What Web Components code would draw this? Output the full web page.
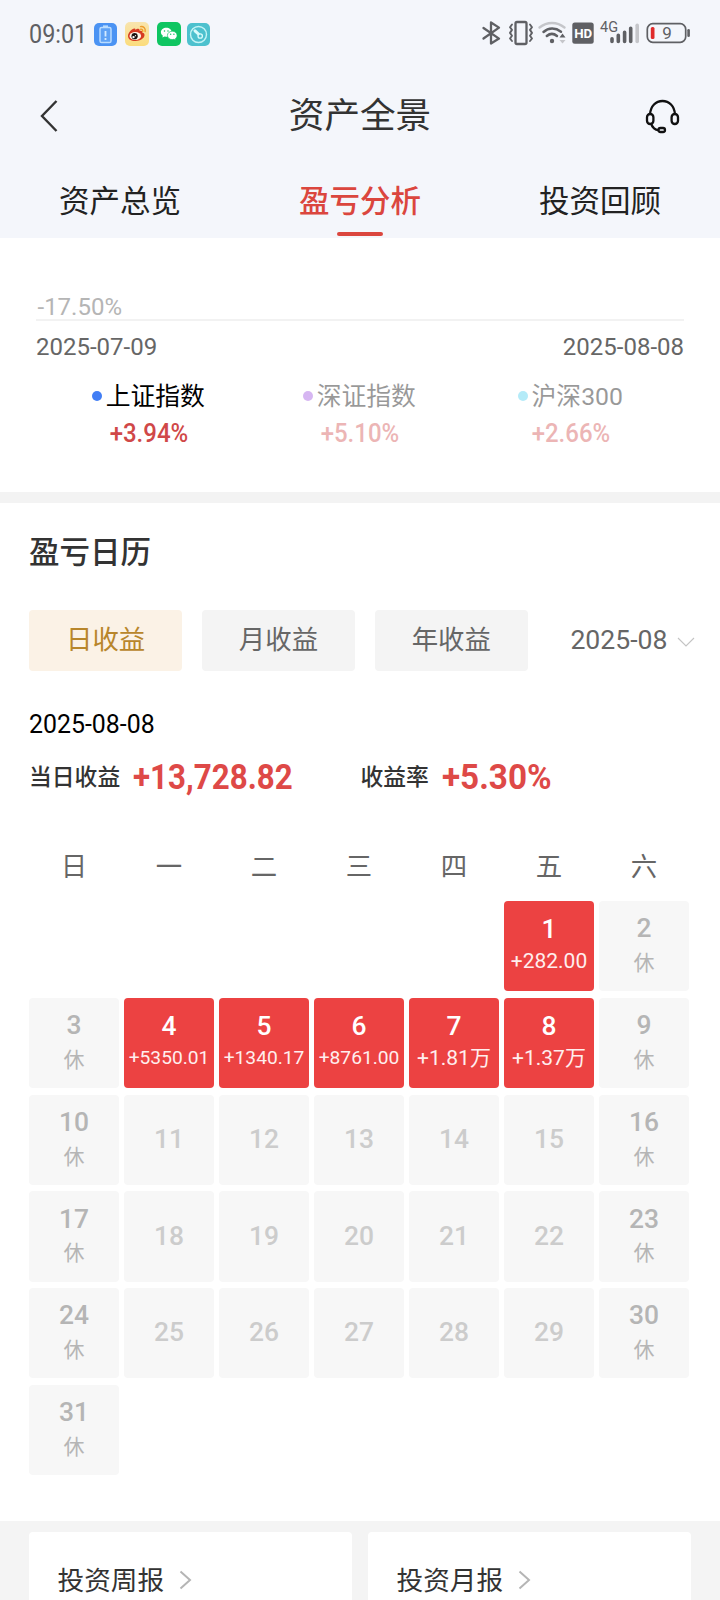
<!DOCTYPE html>
<html lang="zh-CN">
<head>
<meta charset="utf-8">
<title>资产全景</title>
<style>
html,body{margin:0;padding:0;background:#fff}
body{width:720px;height:1600px;overflow:hidden;font-family:Roboto,"Noto Sans CJK SC",sans-serif;color:#333}
</style>
</head>
<body>
<asset-page></asset-page>
<script>
function define(name, css, html) {
  customElements.define(name, class extends HTMLElement {
    connectedCallback() {
      if (this.shadowRoot) return;
      const root = this.attachShadow({ mode: 'open' });
      root.innerHTML = '<style>*{box-sizing:border-box}' + css + '</style>' + (typeof html === 'function' ? html(this) : html);
    }
  });
}

define('status-bar', `
:host{display:flex;height:70px;padding:0 28px 0 29px;justify-content:space-between;align-items:flex-start;color:#5f6064}
.side{display:flex;align-items:flex-start}
svg{display:block;flex:none}
.time{width:65px;line-height:30px;margin-top:19.5px;font-size:25px}
.time span{display:inline-block;transform:scaleX(.935);transform-origin:0 50%}
`, `
<div class="side">
  <div class="time"><span>09:01</span></div>
  <svg width="23" height="23" viewBox="0 0 23 23" style="margin-top:23px"><rect width="23" height="23" rx="5" fill="#4b93f3"/><rect x="6" y="4.5" width="11" height="15" rx="1.6" fill="#5fa2f5" stroke="#b9dcff" stroke-width="1.5"/><path d="M9 3.2h5" stroke="#b9dcff" stroke-width="1.6"/><path d="M11.5 8v5.5M11.5 15v2" stroke="#d4eaff" stroke-width="1.8"/></svg>
  <svg width="24" height="24" viewBox="0 0 24 24" style="margin:22px 0 0 8px"><defs><linearGradient id="g" x2="0" y2="1"><stop stop-color="#f8e4ae"/><stop offset="1" stop-color="#fbdc7c"/></linearGradient></defs><rect width="24" height="24" rx="5" fill="url(#g)"/><path d="M10.3 8.1c1.5-1.5 3.8-2 4.3-.4.2.7 0 1.2 0 1.2s2.900-.6 2.600 1.700c1.900.5 2.300 1.400 2.300 2.700 0 3-4.300 5.700-9 5.700S3 16.900 3 13.900c0-3.200 4.300-7.700 6.600-7.400.9.100 1 .9.700 1.600z" fill="#d63a22"/><ellipse cx="10.300" cy="14" rx="5.800" ry="4" fill="#fff6e8"/><circle cx="9.600" cy="14.200" r="3.100" fill="#1c1412"/><circle cx="8.500" cy="15.100" r="1.200" fill="#fff"/><circle cx="10.500" cy="13.700" r=".6" fill="#fff"/><path d="M15.500 4.600c3.200-.4 5.300 1.900 4.600 4.900M15.700 7.200c1.500-.2 2.300.8 2 2.100" fill="none" stroke="#ee9c2c" stroke-width="1.400" stroke-linecap="round"/></svg>
  <svg width="24" height="24" viewBox="0 0 24 24" style="margin:22px 0 0 8px"><rect width="24" height="24" rx="5" fill="#0fc561"/><path d="M9.300 5.700c-3 0-5.400 2-5.400 4.500 0 1.400.8 2.600 2 3.500l-.5 1.800 2.100-1.100 1.800.3c3 0 5.400-2 5.400-4.500s-2.400-4.500-5.400-4.500z" fill="#fff"/><path d="M15.300 9.200c-2.700 0-4.900 1.900-4.900 4.200s2.200 4.200 4.900 4.200l1.600-.3 1.900 1-.5-1.600c1.100-.8 1.800-1.900 1.800-3.300 0-2.300-2.100-4.200-4.800-4.200z" fill="#fff" stroke="#0fc561" stroke-width=".7"/><g fill="#0fc561"><circle cx="7.500" cy="8.900" r=".75"/><circle cx="11" cy="8.900" r=".75"/><circle cx="13.700" cy="12.300" r=".7"/><circle cx="16.900" cy="12.300" r=".7"/></g></svg>
  <svg width="23" height="23" viewBox="0 0 23 23" style="margin:23px 0 0 6px"><rect width="23" height="23" rx="5" fill="#4dc1ce"/><circle cx="11.500" cy="11.500" r="8" fill="none" stroke="#c4f4f5" stroke-width="1.400"/><path d="M8 7.800l4 3.700" stroke="#d9fbfb" stroke-width="3" stroke-linecap="round"/><circle cx="13.200" cy="13" r="2.200" fill="#4dc1ce" stroke="#d9fbfb" stroke-width="1.300"/></svg>
</div>
<svg width="212" height="30" viewBox="480 18 212 30" style="margin-top:18px">
  <g fill="none" stroke="#5f6064" stroke-width="2.300" stroke-linejoin="round" stroke-linecap="round">
    <path d="M483.500 28L499 38.600 491 43.500V22.500L499 27.600 483.500 38.500"/>
    <rect x="515.500" y="22" width="11" height="22" rx="1.500"/>
    <path stroke-width="1.900" d="M512 24.500l-2 2.700 2 2.700-2 3 2 2.900-2 2.700 2 2.500M530 24.500l2 2.700-2 2.700 2 3-2 2.900 2 2.700-2 2.500"/>
    <path stroke="#c5c6ca" stroke-width="2.400" d="M539.500 27.500c7.500-6 17.500-6 25 0"/>
    <path stroke-width="2.500" d="M543.500 32c5-4.500 12-4.500 17.500-.3M546.800 36c3.200-2.700 7-2.700 10.200 0"/>
  </g>
  <circle cx="552" cy="41" r="2.200" fill="#5f6064"/><path d="M559.500 37.500h6l-3-4z" fill="#5f6064"/><path d="M559.500 40h6l-3 3.600z" fill="#c5c6ca"/>
  <rect x="572.300" y="22.500" width="21.400" height="21.200" rx="2.500" fill="#5f6064"/>
  <text x="583.200" y="38" font-size="13.500" font-weight="700" text-anchor="middle" textLength="18" lengthAdjust="spacingAndGlyphs" fill="#fff">HD</text>
  <text x="600" y="32" font-size="14.500" textLength="18" lengthAdjust="spacingAndGlyphs" fill="#5f6064">4G</text>
  <g stroke="#5f6064" stroke-width="3.600" stroke-linecap="round"><path d="M612 38.800v2.600M618.300 35.300v6.100M624.600 32.300v9.100M630.700 28.300v13.100"/><path stroke="#c5c6ca" d="M637.200 25.300v16.100"/></g>
  <rect x="647.300" y="23.700" width="38.400" height="18.600" rx="5.500" fill="none" stroke="#5f6064" stroke-width="1.700"/>
  <rect x="650.800" y="27" width="3.700" height="12" rx="1.500" fill="#e02b2b"/><rect x="687.300" y="29" width="2.600" height="8" rx="1.300" fill="#5f6064"/>
  <text x="667" y="39.200" font-size="17" text-anchor="middle" fill="#5f6064">9</text>
</svg>`);

define('nav-bar', `
:host{display:flex;height:90px;padding:2px 40px 0;justify-content:space-between;align-items:center}
h1{margin:0;font-size:35.600px;font-weight:400;line-height:50px;color:#333;padding:0 0 0 17px}
svg{display:block}
`, `
<svg width="18" height="34" viewBox="0 0 18 34"><path d="M16.500 2L2 17 16.500 32" fill="none" stroke="#333" stroke-width="2.400"/></svg>
<h1><slot></slot></h1>
<svg width="35" height="35" viewBox="0 0 35 35"><g fill="none" stroke="#111" stroke-width="2.300"><path d="M5 15.500C5.500 7 11 2 17.500 2S29.500 7 30 15.500M6 24c1 4.500 4.500 7.500 8 7"/><rect x="2" y="15" width="6.400" height="10" rx="3.200"/><rect x="26.600" y="15" width="6.400" height="10" rx="3.200"/><rect x="13.500" y="29" width="6.500" height="4" rx="2"/></g></svg>`);

define('tab-item', `
:host{display:flex;flex-direction:column;align-items:center;flex:1;height:78px;font-size:30.500px;line-height:40px;padding-top:22px;color:#222}
:host([active]){color:#db463e;font-weight:500}
i{display:none;width:46px;height:4px;border-radius:2px;background:#db463e;margin-top:10px}
:host([active]) i{display:block}
`, `<span><slot></slot></span><i></i>`);

define('app-header', `
:host{display:block;background:#f4f6fb;height:238px}
nav{display:flex;height:78px}
`, `
<status-bar></status-bar><nav-bar>资产全景</nav-bar>
<nav><tab-item>资产总览</tab-item><tab-item active>盈亏分析</tab-item><tab-item>投资回顾</tab-item></nav>`);

define('index-item', `
:host{display:flex;flex-direction:column;align-items:center;flex:1}
:host([muted]){opacity:.4}
.n{display:flex;align-items:center;gap:3.500px;height:36px;font-size:24.800px;color:#000;margin-left:-1px}
i{width:10px;height:10px;border-radius:50%;background:var(--dot);margin-top:3px}
b{font-size:25px;line-height:30px;font-weight:500;color:#d04848;transform:scaleX(.96);margin-top:7px}
`, el => `<div class="n"><i></i><span><slot></slot></span></div><b>${el.getAttribute('rate')}</b>`);

define('index-chart', `
:host{display:block;height:265px;padding:54px 36px 0;border-bottom:11px solid #f3f3f3}
.axis{height:30px;line-height:30px;font-size:24px;color:#b5b5b5;padding-left:1.500px}
.line{height:2px;background:#f2f2f2;margin-bottom:10px;margin-top:-3px}
.dates{display:flex;justify-content:space-between;font-size:24px;line-height:32px;color:#666}
.legend{display:flex;margin:13px 7.500px 0}
`, `
<div class="axis">-17.50%</div><div class="line"></div>
<div class="dates"><span>2025-07-09</span><span>2025-08-08</span></div>
<div class="legend">
<index-item rate="+3.94%" style="--dot:#417ef5">上证指数</index-item>
<index-item muted rate="+5.10%" style="--dot:#9a4be0">深证指数</index-item>
<index-item muted rate="+2.66%" style="--dot:#45cef0">沪深300</index-item>
</div>`);

define('period-button', `
:host{display:block;flex:none;width:153.300px;height:61px;border-radius:4px;background:#f4f4f4;color:#666;font-size:26.400px;line-height:60px;text-align:center}
:host([active]){background:#fbf2e6;color:#b8862b}
`, `<slot></slot>`);

define('period-picker', `
:host{display:flex;height:61px;align-items:flex-start;gap:19.500px}
.month{display:flex;flex:none;align-items:center;height:59px;margin-left:23px;font-size:26.600px;color:#666;gap:9.500px;white-space:nowrap}
svg{margin-top:6px}
`, `
<period-button active>日收益</period-button><period-button>月收益</period-button><period-button>年收益</period-button>
<div class="month">2025-08<svg width="18" height="11" viewBox="0 0 18 11"><path d="M1 1l8 8 8-8" fill="none" stroke="#c4c4c4" stroke-width="1.100"/></svg></div>`);

define('profit-figure', `
:host{display:flex;align-items:center;height:40px}
span{font-size:22.800px;font-weight:500;color:#333;line-height:40px;padding-top:1px}
b{font-size:35px;line-height:40px;font-weight:700;color:#de4947;margin:2px 0 0 13px;transform:scaleX(var(--sx,.895));transform-origin:0 50%}
`, el => `<span><slot></slot></span><b>${el.getAttribute('value')}</b>`);

define('day-cell', `
:host{display:flex;flex-direction:column;align-items:center;height:90.300px;border-radius:4px;background:#f7f7f7;color:#b5b5b5;white-space:nowrap}
b{font-size:26.400px;font-weight:500;line-height:30px;margin-top:12.300px}
span{font-size:21px;line-height:30px;margin-top:4.700px}
:host([future]) b{margin-top:29.300px;color:#ccc}
:host([gain]){background:#ec4242;color:#fff}
:host([gain]) b{margin-top:13.300px}
:host([gain]) span{margin-top:1.700px;color:#ffeeee}
:host([long]) span{font-size:19.200px}
`, el => `<b>${el.getAttribute('day')}</b><span><slot></slot></span>`);

define('profit-calendar', `
:host{display:block;padding:25px 29px 0;height:1018px}
h2{margin:0;font-size:30.500px;line-height:50px;font-weight:500;color:#333}
period-picker{margin-top:32px}
.date{font-size:24.900px;line-height:30px;color:#000;margin-top:39px}
.sum{display:flex;margin-top:17px}
.sum profit-figure:first-child{width:331.500px}
.week,.days{display:grid;grid-template-columns:repeat(7,90px);column-gap:5px}
.week{text-align:center;font-size:26.400px;line-height:40px;color:#666;margin-top:50px}
.days{margin-top:14px;row-gap:6.500px}
`, () => {
  const gains = {1:'+282.00',4:'+5350.01',5:'+1340.17',6:'+8761.00',7:'+1.81万',8:'+1.37万'};
  let cells = '';
  for (let d = 1; d <= 31; d++) {
    const col = (d + 4) % 7, start = d === 1 ? ' style="grid-column:6"' : '';
    if (gains[d]) cells += `<day-cell gain${gains[d].length > 7 ? ' long' : ''}${start} day="${d}">${gains[d]}</day-cell>`;
    else if (col === 0 || col === 6) cells += `<day-cell day="${d}">休</day-cell>`;
    else cells += `<day-cell future day="${d}"></day-cell>`;
  }
  return `<h2>盈亏日历</h2><period-picker></period-picker>
<div class="date">2025-08-08</div>
<div class="sum"><profit-figure value="+13,728.82">当日收益</profit-figure><profit-figure value="+5.30%" style="--sx:.95">收益率</profit-figure></div>
<div class="week">${[...'日一二三四五六'].map(w => `<span>${w}</span>`).join('')}</div>
<div class="days">${cells}</div>`;
});

define('report-card', `
:host{display:flex;flex:1;height:100px;background:#fff;border-radius:4px;padding:29px 0 0 28.500px;font-size:26.700px;line-height:40px;color:#333}
svg{margin:9px 0 0 15px}
`, `<span><slot></slot></span><svg width="13" height="20" viewBox="0 0 13 20"><path d="M1.500 1.500l9.500 8.500-9.500 8.500" fill="none" stroke="#b5b5b5" stroke-width="2"/></svg>`);

define('report-row', `
:host{display:flex;gap:16px;height:79px;padding:11px 29px 0;background:#f4f4f4;overflow:hidden}
`, `<report-card>投资周报</report-card><report-card>投资月报</report-card>`);

define('asset-page', `
:host{display:flex;flex-direction:column;width:720px;height:1600px;overflow:hidden}
:host>*{flex:none}
`, `<app-header></app-header><index-chart></index-chart><profit-calendar></profit-calendar><report-row></report-row>`);
</script>
</body>
</html>
